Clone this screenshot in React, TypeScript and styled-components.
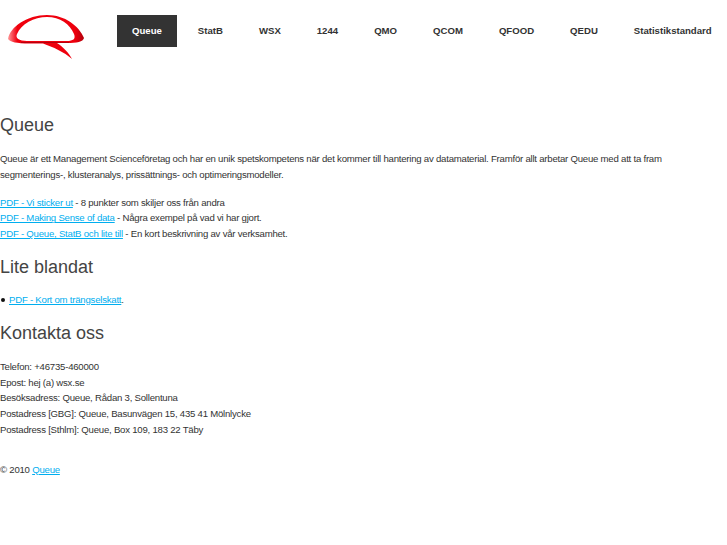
import React from "react";
import styled, { createGlobalStyle } from "styled-components";

const Global = createGlobalStyle`
  html, body { margin: 0; padding: 0; background: #fff; }
  body { font-family: "Liberation Sans", Arial, sans-serif; font-size: 9.6px; letter-spacing: -0.225px; line-height: 15.8px; color: #333; }
`;
const Page = styled.div`width: 727px; height: 545px; overflow: hidden;`;
const Header = styled.header`display: flex; align-items: flex-start; height: 113px;`;
const LogoBox = styled.div`width: 117px; height: 64px; flex: none; padding: 14px 0 0 7px; box-sizing: border-box;`;
const Nav = styled.nav`display: flex; gap: 6px; padding-top: 15px;`;
const NavItem = styled.a<{ $active?: boolean }>`
  height: 32px; padding: 0 15px; flex: none; display: flex; align-items: center;
  font-size: 9.6px; letter-spacing: 0; font-weight: bold; white-space: nowrap;
  color: ${(p) => (p.$active ? "#fff" : "#333")};
  background: ${(p) => (p.$active ? "#333" : "transparent")};
`;
const H2 = styled.h2`margin: 0; font-size: 18px; letter-spacing: 0; font-weight: normal; line-height: 24px; color: #444;`;
const Para = styled.p<{ $top?: number }>`margin: ${(p) => p.$top ?? 0}px 0 0; white-space: nowrap;`;
const Link = styled.a`color: #00aeef; text-decoration: underline;`;
const List = styled.ul`margin: 13px 0 0; padding: 0; list-style: none;`;
const Item = styled.li`display: flex; align-items: center;`;
const Bullet = styled.span`width: 4px; height: 4px; margin: 0 4px 0 1px; border-radius: 50%; background: #111; flex: none;`;
const Main = styled.main`display: flex; flex-direction: column;`;
const Section = styled.section<{ $top: number }>`margin-top: ${(p) => p.$top}px;`;

const nav = ["Queue", "StatB", "WSX", "1244", "QMO", "QCOM", "QFOOD", "QEDU", "Statistikstandard"];

export default function App() {
  return (
    <Page>
      <Global />
      <Header>
        <LogoBox>
          <svg width="78" height="48" viewBox="0 0 78 48">
            <defs>
              <linearGradient id="q" x1="0" y1="0" x2="1" y2="0">
                <stop offset="0" stopColor="#ff9a9a" />
                <stop offset="0.12" stopColor="#f00010" />
                <stop offset="0.88" stopColor="#ee0010" />
                <stop offset="1" stopColor="#b00008" />
              </linearGradient>
              <filter id="b" x="-5%" y="-5%" width="110%" height="110%"><feGaussianBlur stdDeviation="0.4" /></filter>
            </defs>
            <g filter="url(#b)">
              <path d="M1 25 C3 13 20 1 40 1 C58 1 72 12 77 24 C76 28 70 29 60 29 L50 29 C56 33 62 39 65 45 C57 38 46 33 36 29.5 L22 29.5 C10 29.5 3 28 1 25 Z M10 20 C14 10 27 3 40 3 C53 3 63 10 67 20 C69 25 66 27 60 27 L20 27 C12 27 8 24 10 20 Z" fill="url(#q)" fillRule="evenodd" />
              <path d="M14 28.5 L62 28.5" stroke="#700" strokeWidth="0.8" opacity="0.6" />
            </g>
          </svg>
        </LogoBox>
        <Nav>
          {nav.map((t, i) => <NavItem key={t} $active={i === 0}>{t}</NavItem>)}
        </Nav>
      </Header>
      <Main>
        <Section $top={0}>
          <H2>Queue</H2>
          <Para $top={14}>Queue är ett Management Scienceföretag och har en unik spetskompetens när det kommer till hantering av datamaterial. Framför allt arbetar Queue med att ta fram<br />segmenterings-, klusteranalys, prissättnings- och optimeringsmodeller.</Para>
          <Para $top={12}>
            <Link>PDF - Vi sticker ut</Link> - 8 punkter som skiljer oss från andra<br />
            <Link>PDF - Making Sense of data</Link> - Några exempel på vad vi har gjort.<br />
            <Link>PDF - Queue, StatB och lite till</Link> - En kort beskrivning av vår verksamhet.
          </Para>
        </Section>
        <Section $top={13}>
          <H2>Lite blandat</H2>
          <List><Item><Bullet /><span><Link>PDF - Kort om trängselskatt</Link>.</span></Item></List>
        </Section>
        <Section $top={13}>
          <H2>Kontakta oss</H2>
          <Para $top={14}>Telefon: +46735-460000<br />Epost: hej (a) wsx.se<br />Besöksadress: Queue, Rådan 3, Sollentuna<br />Postadress [GBG]: Queue, Basunvägen 15, 435 41 Mölnlycke<br />Postadress [Sthlm]: Queue, Box 109, 183 22 Täby</Para>
          <Para $top={24}>© 2010 <Link>Queue</Link></Para>
        </Section>
      </Main>
    </Page>
  );
}
